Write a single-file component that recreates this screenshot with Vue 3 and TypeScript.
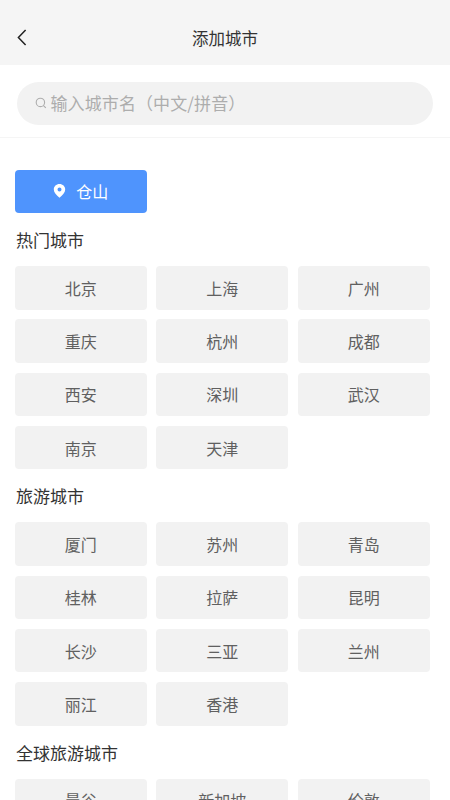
<script setup lang="ts">
const sections: { title: string; cities: string[] }[] = [
  { title: '热门城市', cities: ['北京', '上海', '广州', '重庆', '杭州', '成都', '西安', '深圳', '武汉', '南京', '天津'] },
  { title: '旅游城市', cities: ['厦门', '苏州', '青岛', '桂林', '拉萨', '昆明', '长沙', '三亚', '兰州', '丽江', '香港'] },
  { title: '全球旅游城市', cities: ['曼谷', '新加坡', '伦敦'] },
]
</script>

<template>
  <div class="page">
    <header class="header">
      <svg class="back" width="10" height="17" viewBox="0 0 10 17" fill="none">
        <path d="M8.6 1 L1.4 8.5 L8.6 16" stroke="#222" stroke-width="1.5" />
      </svg>
      <span class="header-title">添加城市</span>
    </header>
    <div class="search-bar">
      <div class="search">
        <svg width="12" height="12" viewBox="0 0 12 12" fill="none">
          <circle cx="5.4" cy="5.4" r="4.2" stroke="#adadad" stroke-width="1.1" />
          <path d="M8.5 8.6 L10.8 10.9" stroke="#adadad" stroke-width="1.1" />
        </svg>
        <span class="placeholder">输入城市名（中文/拼音）</span>
      </div>
    </div>
    <main class="content">
      <div class="location">
        <svg width="13" height="16" viewBox="0 0 13 16">
          <path fill-rule="evenodd" fill="#fff" d="M6.5 1C3.2 1 .8 3.4.8 6.5c0 3 2.6 5.6 5.7 8.3 3.1-2.7 5.7-5.3 5.7-8.3C12.2 3.4 9.8 1 6.5 1Zm0 3.6a2 2 0 1 1 0 4 2 2 0 0 1 0-4Z" />
        </svg>
        <span>仓山</span>
      </div>
      <section v-for="s in sections" :key="s.title">
        <h2 class="title">{{ s.title }}</h2>
        <div class="grid">
          <div v-for="c in s.cities" :key="c" class="city">{{ c }}</div>
        </div>
      </section>
    </main>
  </div>
</template>

<style>
html, body { margin: 0; background: #fff; }
</style>

<style scoped>
.page {
  height: 800px;
  overflow: hidden;
  font-family: "Noto Sans CJK SC", "Noto Sans", sans-serif;
  background: #fff;
}
.header {
  height: 64.5px;
  background: #f5f5f5;
  display: flex;
  align-items: center;
  justify-content: center;
  position: relative;
  padding-top: 12px;
  box-sizing: border-box;
}
.back {
  position: absolute;
  left: 17px;
  top: 29px;
}
.header-title {
  font-size: 16.5px;
  line-height: 24px;
  color: #333;
}
.search-bar {
  height: 73.5px;
  padding: 17.5px 17px 0;
  box-sizing: border-box;
  border-bottom: 1.5px solid #f5f5f5;
}
.search {
  height: 43px;
  border-radius: 22px;
  background: #f2f2f2;
  display: flex;
  align-items: center;
  gap: 4px;
  padding-left: 17.5px;
  color: #adadad;
  font-size: 17px;
}
.search svg {
  margin-top: -2px;
}
.placeholder {
  margin-top: -3px;
  letter-spacing: 0.1px;
}
.content {
  padding: 31.5px 0 0 15px;
}
.location {
  width: 131.7px;
  height: 43.5px;
  border-radius: 4px;
  background: #4f94fd;
  color: #fff;
  font-size: 16px;
  display: flex;
  align-items: center;
  justify-content: center;
  gap: 10px;
}
.title {
  margin: 0;
  height: 53px;
  padding-left: 1px;
  box-sizing: border-box;
  display: flex;
  align-items: center;
  font-size: 17px;
  font-weight: 400;
  color: #333;
}
.grid {
  display: grid;
  grid-template-columns: repeat(3, 131.7px);
  grid-auto-rows: 43.5px;
  gap: 9.75px;
}
.city {
  background: #f2f2f2;
  border-radius: 4px;
  display: flex;
  align-items: center;
  justify-content: center;
  font-size: 16px;
  color: #606060;
}
</style>
